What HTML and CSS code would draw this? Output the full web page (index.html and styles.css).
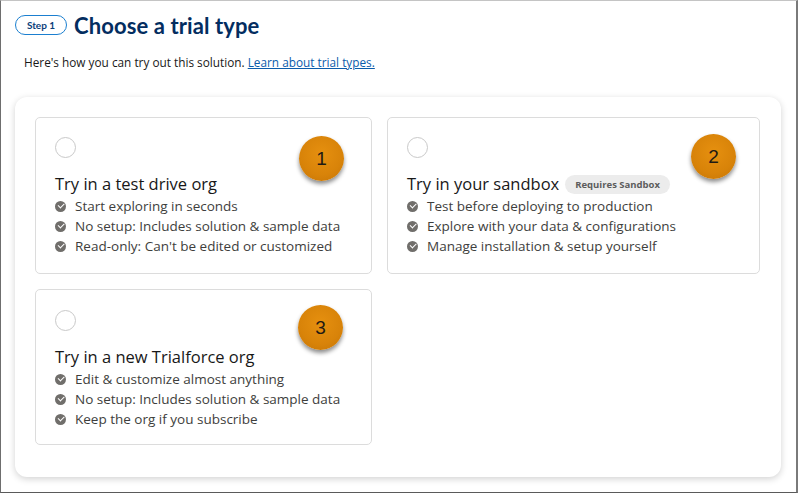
FILE: index.html
```html
<!DOCTYPE html>
<html lang="en">

<head>
    <meta charset="UTF-8">
    <title>Choose a trial type</title>
    <link rel="stylesheet" href="styles.css">
</head>

<body>
    <div class="frame">
        <!-- Heading -->
        <div class="step-head">
            <span class="step-pill">Step 1</span>
            <h1>Choose a trial type</h1>
        </div>
        <p class="intro">Here's how you can try out this solution. <a href="#">Learn about trial types.</a></p>

        <!-- Trial options -->
        <section class="panel">
            <div class="options">
                <div class="option">
                    <span class="radio"></span>
                    <h2>Try in a test drive org</h2>
                    <ul>
                        <li><span class="check"></span>Start exploring in seconds</li>
                        <li><span class="check"></span>No setup: Includes solution &amp; sample data</li>
                        <li><span class="check"></span>Read-only: Can't be edited or customized</li>
                    </ul>
                    <span class="marker">1</span>
                </div>
                <div class="option">
                    <span class="radio"></span>
                    <h2>Try in your sandbox <span class="tag">Requires Sandbox</span></h2>
                    <ul>
                        <li><span class="check"></span>Test before deploying to production</li>
                        <li><span class="check"></span>Explore with your data &amp; configurations</li>
                        <li><span class="check"></span>Manage installation &amp; setup yourself</li>
                    </ul>
                    <span class="marker marker-2">2</span>
                </div>
                <div class="option option-3">
                    <span class="radio"></span>
                    <h2>Try in a new Trialforce org</h2>
                    <ul>
                        <li><span class="check"></span>Edit &amp; customize almost anything</li>
                        <li><span class="check"></span>No setup: Includes solution &amp; sample data</li>
                        <li><span class="check"></span>Keep the org if you subscribe</li>
                    </ul>
                    <span class="marker marker-3">3</span>
                </div>
            </div>
        </section>
    </div>
</body>

</html>
```

FILE: styles.css
```css
/* Base Styles */
* {
    margin: 0;
    padding: 0;
    box-sizing: border-box;
}

body {
    background-color: #ffffff;
    color: #181818;
    font-family: 'Open Sans', sans-serif;
}

.frame {
    width: 798px;
    height: 493px;
    border-top: 1px solid #c4c4c4;
    border-left: 1px solid #6e6e6e;
    border-right: 2px solid #7a7a7a;
    border-bottom: 1px solid #5a5a5a;
    padding: 13px 17px 0 14px;
    overflow: hidden;
}

/* Heading */
.step-head {
    display: flex;
    align-items: center;
    gap: 7px;
    height: 22px;
}

.step-pill {
    display: inline-flex;
    align-items: center;
    justify-content: center;
    width: 52px;
    height: 20px;
    border: 1px solid #1b7fd0;
    border-radius: 10px;
    font-size: 10px;
    font-weight: 700;
    color: #0b3e7a;
    font-family: 'Lato', sans-serif;
}

h1 {
    font-family: 'Lato', sans-serif;
    font-size: 22px;
    font-weight: 700;
    color: #032d60;
    letter-spacing: 0.1px;
}

.intro {
    margin: 17px 0 0 9px;
    font-size: 11.8px;
    line-height: 18px;
    color: #181818;
}

.intro a {
    color: #0b5cab;
    text-decoration: underline;
}

/* Panel */
.panel {
    margin-top: 26px;
    width: 766px;
    height: 380px;
    background-color: #ffffff;
    border-radius: 12px;
    box-shadow: 0 2px 7px rgba(0, 0, 0, 0.18);
    padding: 20px 0 0 20px;
}

.options {
    display: grid;
    grid-template-columns: 337px 373px;
    column-gap: 15px;
    row-gap: 15px;
}

.option {
    position: relative;
    border: 1px solid #dcdcdc;
    border-radius: 5px;
    padding: 19px 19px 17px;
    height: 157px;
}

.option-3 {
    height: 156px;
    padding-top: 20px;
}

.radio {
    display: block;
    width: 21px;
    height: 21px;
    border: 1px solid #c9c9c9;
    border-radius: 50%;
    margin-bottom: 14px;
}

.option h2 {
    display: flex;
    align-items: center;
    gap: 6px;
    font-size: 16.5px;
    font-weight: 400;
    line-height: 24px;
    color: #181818;
}

.tag {
    display: inline-block;
    padding: 0 10px;
    height: 19px;
    line-height: 19px;
    border-radius: 10px;
    background-color: #ececec;
    font-size: 9.5px;
    font-weight: 700;
    color: #5c5c5c;
}

.option ul {
    list-style: none;
}

.option li {
    display: flex;
    align-items: center;
    font-size: 13.5px;
    line-height: 20px;
    color: #3e3e3c;
}

.check {
    position: relative;
    width: 11px;
    height: 11px;
    border-radius: 50%;
    background-color: #706e6b;
    margin-right: 9px;
    flex-shrink: 0;
}

.check::after {
    content: '';
    position: absolute;
    left: 3px;
    top: 2.5px;
    width: 5px;
    height: 2.5px;
    border-left: 1.5px solid #ffffff;
    border-bottom: 1.5px solid #ffffff;
    transform: rotate(-45deg);
}

/* Numbered annotation markers */
.marker {
    position: absolute;
    left: 263px;
    top: 18px;
    width: 45px;
    height: 45px;
    border-radius: 50%;
    background: radial-gradient(circle at 50% 40%, #e6900f 0%, #d88309 60%, #c47406 100%);
    box-shadow: 0 3px 4px rgba(0, 0, 0, 0.45);
    display: flex;
    align-items: center;
    justify-content: center;
    font-family: 'Liberation Sans', sans-serif;
    font-size: 19px;
    color: #1e1a14;
}

.marker-2 {
    left: 303px;
    top: 16px;
}

.marker-3 {
    left: 262px;
    top: 15px;
}
```
